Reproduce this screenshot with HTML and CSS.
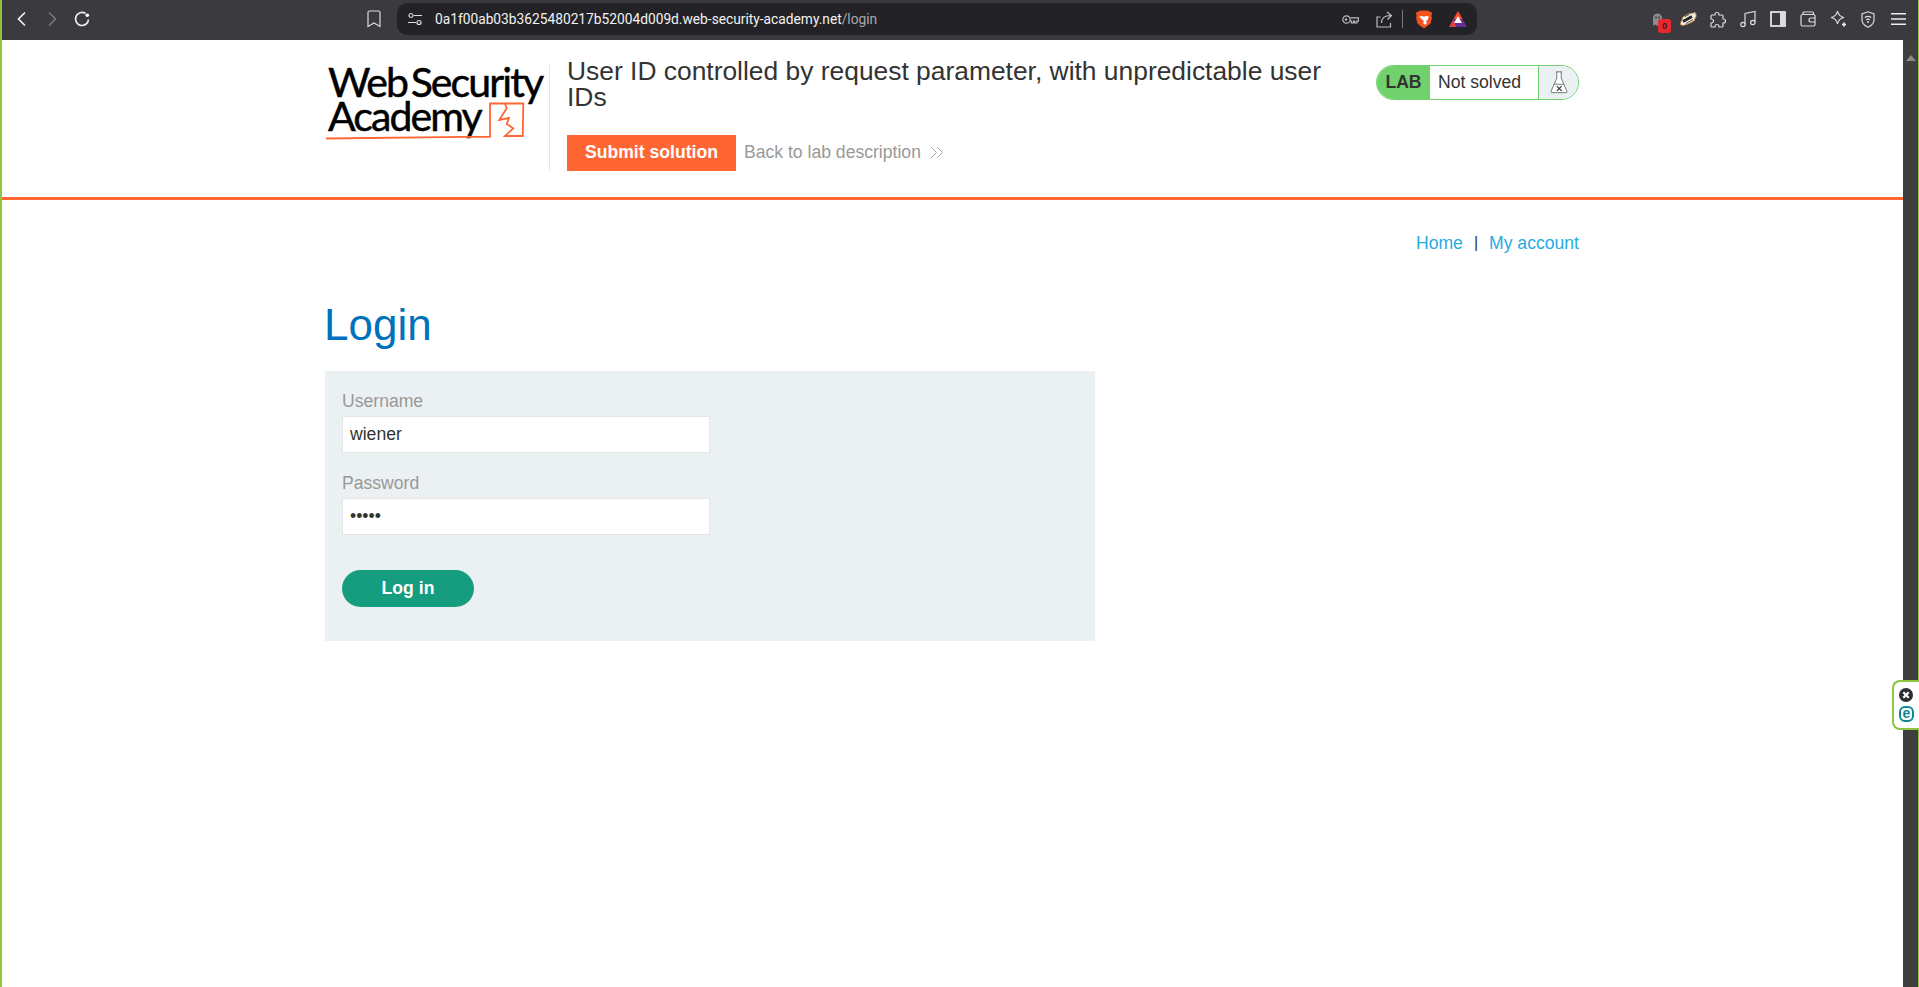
FILE: index.html
```html
<!DOCTYPE html>
<html lang="en">
<head>
  <meta charset="UTF-8" />
  <title>User ID controlled by request parameter, with unpredictable user IDs</title>
  <link rel="stylesheet" href="styles.css">
</head>
<body>
  <div class="edge"></div>
  <div class="window">

    <div class="toolbar">
      <span class="tool"><svg width="16" height="16" viewBox="0 0 16 16"><path d="M11 1.5 4.5 8l6.500 6.500" class="ico"/></svg></span>
      <span class="tool"><svg width="16" height="16" viewBox="0 0 16 16"><path d="M5 1.500 11.500 8 5 14.500" class="ico dim"/></svg></span>
      <span class="tool"><svg width="18" height="18" viewBox="0 0 18 18"><path d="M15.500 9.500A6.500 6.500 0 1 1 12.500 3.500" class="ico"/><circle cx="14.300" cy="5.300" r="1.800" fill="#fff"/></svg></span>
      <span class="tool bookmark"><svg width="14" height="18" viewBox="0 0 14 18"><path d="M2.500 1h9a1.500 1.500 0 0 1 1.500 1.500V16.500L7 13l-6 3.500V2.500A1.500 1.500 0 0 1 2.500 1z" class="ico thin"/></svg></span>

      <div class="urlbar">
        <svg class="tune" width="14" height="14" viewBox="0 0 14 14"><path d="M6 3.500h8M0 10.500h8" class="ico thin"/><circle cx="3" cy="3.500" r="2" class="ico thin"/><circle cx="11" cy="10.500" r="2" class="ico thin"/></svg>
        <span class="url">0a1f00ab03b3625480217b52004d009d.web-security-academy.net<span class="url-path">/login</span></span>
        <span class="tool key"><svg width="17" height="11" viewBox="0 0 17 11"><circle cx="4.500" cy="5.500" r="3.700" class="ico key-line"/><circle cx="4" cy="5.500" r="1.200" fill="#bbb"/><path d="M8.500 3.800H16.500V7.200H15V9H12.800V7.200H11.500V9H9.500V7.200H8.500" class="ico key-line"/></svg></span>
        <span class="tool share"><svg width="17" height="17" viewBox="0 0 17 17"><path d="M4.500 6H1v10h13.500v-4" class="ico key-line"/><path d="M5.500 12c0-5 3-7.500 9-7.500M11 1l4.500 3.500L11.500 8.500" class="ico key-line"/></svg></span>
        <span class="url-sep"></span>
        <span class="tool lion"><svg width="16" height="19" viewBox="0 0 16 19"><path d="M4 .5h8l1.500 1.500 1.500-.5 1 2-.7 2.500.7 1.500-1.500 6-3 2.500L8 18.500 4.500 16l-3-2.500L0 7.500.7 6 0 3.500l1-2 1.500.5z" fill="#f1521f"/><path d="M3 6.500l3-.5 2 .8 2-.8 3 .5-1.500 3.500-1.500 1 1 2-2 2-2-2 1-2-1.500-1z" fill="#fff"/></svg></span>
        <span class="tool bat"><svg width="18" height="16" viewBox="0 0 18 16"><path d="M9 0l9 16H0z" fill="#662d91"/><path d="M9 0 13.500 8h-9z" fill="#ff4724"/><path d="M0 16l4.500-8L7 16z" fill="#ff4724" opacity=".8"/><path d="M9 5l4 7H5z" fill="#fff"/></svg></span>
      </div>

      <span class="tool ghost"><svg width="14" height="16" viewBox="0 0 14 16"><path d="M2 15V7a4.500 4.500 0 0 1 9 0v8l-2-1.500-2.500 1.500L4 13.500z" fill="#8b8b90"/><circle cx="5" cy="6.500" r="1" fill="#3b3a3f"/><circle cx="8" cy="6.500" r="1" fill="#3b3a3f"/></svg><span class="badge">0</span></span>
      <span class="tool"><svg width="18" height="14" viewBox="0 0 18 14"><path d="M1 12.500 4 5l5-3 7.500-1.500.8 3.500-2.300 5-6 3-5 1.500z" fill="#f4eee2" stroke="#b97a3e" stroke-width=".8"/><path d="M4 9.500 13 4.500" stroke="#222" stroke-width="2.600"/><path d="M7 11.500l7-4M6 4.500l4-2" stroke="#444" stroke-width="1"/></svg></span>
      <span class="tool"><svg width="17" height="17" viewBox="0 0 17 17"><path d="M7 1.500a2 2 0 0 1 2 2V4h3a1 1 0 0 1 1 1v3h.5a2 2 0 0 1 0 4H13v3a1 1 0 0 1-1 1H9v-.5a2 2 0 0 0-4 0V16H2a1 1 0 0 1-1-1v-3h.5a2 2 0 0 0 0-4H1V5a1 1 0 0 1 1-1h3v-.5a2 2 0 0 1 2-2z" class="ico thin"/></svg></span>
      <span class="tool"><svg width="16" height="18" viewBox="0 0 16 18"><path d="M5 14.500V3.500L15 1.500V12" class="ico thin"/><circle cx="3" cy="14.500" r="2.200" class="ico thin"/><circle cx="12.800" cy="12.500" r="2.200" class="ico thin"/></svg></span>
      <span class="tool"><svg width="16" height="16" viewBox="0 0 16 16"><rect x="1" y="1" width="14" height="14" class="ico" stroke-width="1.500"/><rect x="10" y="1" width="5" height="14" fill="#ddd"/></svg></span>
      <span class="tool"><svg width="16" height="16" viewBox="0 0 16 16"><path d="M3 3.500V2a1 1 0 0 1 1-1h8.500a1 1 0 0 1 1 1v2" class="ico thin"/><rect x="1" y="3.500" width="14" height="11.500" rx="1.500" class="ico thin"/><path d="M15 7h-4a2 2 0 0 0 0 4h4" class="ico thin"/></svg></span>
      <span class="tool"><svg width="17" height="18" viewBox="0 0 17 18"><path d="M7.500 1c.8 4 2.500 5.700 6.500 6.500-4 .8-5.700 2.500-6.500 6.500-.8-4-2.500-5.700-6.500-6.500C5 6.700 6.700 5 7.500 1z" class="ico thin"/><path d="M14 12.500v4M12 14.500h4" class="ico"/></svg></span>
      <span class="tool"><svg width="14" height="17" viewBox="0 0 14 17"><path d="M7 .8 13 3v6c0 3.500-2.800 5.800-6 7.200C3.800 14.800 1 12.500 1 9V3z" class="ico thin"/><path d="M3.800 6.500c2-1.500 4.400-1.500 6.400 0M5.200 8.800c1.100-.8 2.500-.8 3.600 0" class="ico thin"/><circle cx="7" cy="11" r="1" fill="#ddd"/></svg></span>
      <span class="tool"><svg width="15" height="12" viewBox="0 0 15 12"><path d="M0 .7h15M0 6h15M0 11.300h15" class="ico" stroke-width="1.200"/></svg></span>
    </div>

    <div class="viewport">
      <div class="page">

        <div class="lab-header">
          <div class="lab-inner">
            <div class="logo">
              <div class="logo-text">Web Security<br>Academy</div>
              <svg class="logo-mark" width="220" height="90" viewBox="0 0 220 90">
                <path d="M1 78.500 141 76.800H165V43.500H198.300L197.700 76H180L188.300 68.300 181.700 64 184 58 174.300 60 181.700 48.300 180 43.500" class="logo-line"/>
              </svg>
            </div>
            <div class="logo-rule"></div>
            <div class="title-block">
              <h2 class="lab-title">User ID controlled by request parameter, with unpredictable user IDs</h2>
              <div class="lab-actions">
                <button class="submit-btn">Submit solution</button>
                <a class="back-link" href="#">Back to lab description
                  <svg width="14" height="13" viewBox="0 0 14 13"><path d="M1 1l5.500 5.500L1 12M7 1l5.500 5.500L7 12" class="chev"/></svg>
                </a>
              </div>
            </div>
            <div class="lab-status">
              <span class="status-tag">LAB</span>
              <span class="status-text">Not solved</span>
              <span class="status-icon">
                <svg width="18" height="23" viewBox="0 0 20 26"><path d="M6.500 1h7M7.500 1v7L1 23a1 1 0 0 0 1 1.500h16a1 1 0 0 0 1-1.500L12.500 8V1" class="flask"/><path d="M4.500 15h11" class="flask"/><path d="M7.500 17l5.500 5.500M13 17l-5.500 5.500" class="flask-x"/></svg>
              </span>
            </div>
          </div>
        </div>

        <div class="content">
          <nav class="top-links">
            <a href="#">Home</a><span class="pipe">|</span><a href="#">My account</a>
          </nav>
          <h1 class="page-title">Login</h1>
          <form class="login-form">
            <label>Username</label>
            <input type="text" value="wiener">
            <label>Password</label>
            <input type="password" value="peter">
            <button type="button" class="login-btn">Log in</button>
          </form>
        </div>

      </div>

      <div class="scrollbar">
        <svg width="10" height="6" viewBox="0 0 10 6"><path d="M5 0l5 6H0z" fill="#8a8a8a"/></svg>
      </div>
    </div>
  </div>
  <div class="edge edge-right"></div>

  <div class="eset-tab">
    <svg width="14" height="14" viewBox="0 0 14 14"><circle cx="7" cy="7" r="7" fill="#2b2f33"/><path d="M4.300 4.300l5.400 5.400M9.700 4.300 4.300 9.700" stroke="#fff" stroke-width="2.200"/></svg>
    <span class="eset-e">e</span>
  </div>
</body>
</html>
```

FILE: styles.css
```css
html, body {
  margin: 0;
  height: 100%;
  overflow: hidden;
}
body {
  display: flex;
  background-color: #fff;
  font-family: "Liberation Sans", Arial, sans-serif;
  font-size: 17.6px;
  color: #333332;
}
.edge {
  width: 2px;
  background-color: #8cc63f;
}
.edge-right {
  width: 1px;
}
.window {
  flex: 1;
  display: flex;
  flex-direction: column;
  min-width: 0;
}

/* browser chrome */
.toolbar {
  height: 40px;
  box-sizing: border-box;
  padding: 0 0 2px 5px;
  display: flex;
  align-items: center;
  background-color: #3b3a3f;
}
.tool {
  width: 30px;
  height: 30px;
  flex: none;
  display: flex;
  align-items: center;
  justify-content: center;
  position: relative;
}
.ico {
  fill: none;
  stroke: #eee;
  stroke-width: 1.700;
}
.ico.thin {
  stroke: #ddd;
  stroke-width: 1.200;
}
.ico.dim {
  stroke: #77767a;
}
.ico.key-line {
  stroke: #bdbdc0;
  stroke-width: 1.200;
}
.bookmark {
  margin-left: 262px;
  margin-right: 8px;
}
.urlbar {
  width: 1080px;
  height: 32px;
  flex: none;
  margin-right: 166px;
  display: flex;
  align-items: center;
  border-radius: 10px;
  background-color: #232227;
}
.tune {
  margin-left: 11px;
  margin-right: 13px;
}
.url {
  flex: 1;
  font-family: Roboto, sans-serif;
  font-size: 13.750px;
  color: #f2f2f2;
}
.url-path {
  color: #a9a9ad;
}
.key, .share {
  width: 34px;
}
.url-sep {
  width: 1px;
  height: 18px;
  margin: 0 4px 0 1px;
  background-color: #77767a;
}
.lion, .bat {
  width: 34px;
}
.bat {
  margin-right: 2px;
}
.badge {
  position: absolute;
  left: 15px;
  top: 15px;
  width: 13px;
  height: 14px;
  border-radius: 3px;
  background-color: #e8282f;
  color: #222;
  font-size: 9px;
  font-weight: bold;
  line-height: 14px;
  text-align: center;
}

/* page */
.viewport {
  flex: 1;
  display: flex;
  min-height: 0;
}
.page {
  flex: 1;
  min-width: 0;
}
.scrollbar {
  width: 15px;
  padding-top: 15px;
  display: flex;
  justify-content: center;
  align-items: flex-start;
  background-color: #3f3f3f;
}
.lab-header {
  height: 157px;
  border-bottom: 3px solid #ff6633;
}
.lab-inner {
  width: 1254px;
  margin: 0 auto;
  padding: 20px 1px 0 0;
  display: flex;
  align-items: flex-start;
}
.logo {
  width: 224px;
  height: 90px;
  flex: none;
  padding: 5px 0 0 3px;
  box-sizing: border-box;
  position: relative;
}
.logo-text {
  font-family: Lato, sans-serif;
  font-size: 41px;
  line-height: 34px;
  letter-spacing: -1.900px;
  word-spacing: -5px;
  white-space: nowrap;
  color: #000;
  -webkit-text-stroke: 0.5px #000;
}
.logo-mark {
  position: absolute;
  left: 0;
  top: 0;
}
.logo-line {
  fill: none;
  stroke: #ff6633;
  stroke-width: 1.800;
}
.logo-rule {
  width: 1px;
  height: 105px;
  margin-top: 5px;
  flex: none;
  background-color: #e6e6e6;
}
.title-block {
  width: 780px;
  padding-left: 17px;
  flex: none;
}
.lab-title {
  margin: -2px 0 0;
  font-size: 26.400px;
  font-weight: normal;
  line-height: 26px;
}
.lab-actions {
  margin-top: 25px;
  display: flex;
  align-items: center;
}
.submit-btn {
  height: 36px;
  padding: 0 18px 2px;
  border: none;
  background-color: #ff6633;
  color: #fff;
  font-family: inherit;
  font-size: 17.600px;
  font-weight: bold;
}
.back-link {
  margin-left: 8px;
  margin-bottom: 2px;
  display: flex;
  align-items: center;
  gap: 9px;
  color: #999;
  text-decoration: none;
}
.chev {
  fill: none;
  stroke: #a6a6a6;
  stroke-width: 1;
}
.lab-status {
  width: 203px;
  height: 35px;
  margin-top: 5px;
  margin-left: auto;
  box-sizing: border-box;
  display: flex;
  align-items: center;
  border: 1.500px solid #70d16d;
  border-radius: 18px;
  overflow: hidden;
}
.status-tag {
  width: 53px;
  height: 100%;
  flex: none;
  display: flex;
  align-items: center;
  justify-content: center;
  background-color: #70d16d;
  font-weight: bold;
}
.status-text {
  flex: 1;
  padding-left: 8px;
}
.status-icon {
  width: 39px;
  height: 100%;
  flex: none;
  display: flex;
  align-items: center;
  justify-content: center;
  border-left: 1.500px solid #70d16d;
  background-color: #ebf0f2;
}
.flask {
  fill: #fff;
  stroke: #666;
  stroke-width: 1;
}
.flask-x {
  fill: none;
  stroke: #333;
  stroke-width: 1.300;
}
.content {
  width: 1254px;
  margin: 0 auto;
  padding-right: 1px;
}
.top-links {
  margin-top: 31px;
  display: flex;
  justify-content: flex-end;
  line-height: 24px;
}
.top-links a {
  color: #29abe2;
  text-decoration: none;
}
.pipe {
  margin: 0 11px;
  font-size: 16px;
}
.page-title {
  margin: 45px 0 0 -1px;
  font-size: 44px;
  font-weight: normal;
  line-height: 50px;
  color: #0071bc;
}
.login-form {
  width: 770px;
  height: 270px;
  margin-top: 21px;
  padding: 0 17px;
  box-sizing: border-box;
  background-color: #ebf0f2;
}
.login-form label {
  display: block;
  padding-top: 19px;
  margin-bottom: 4px;
  line-height: 22px;
  color: #999;
}
.login-form input {
  width: 368px;
  height: 37px;
  box-sizing: border-box;
  display: block;
  padding: 0 7px;
  border: 1px solid #e6e6e6;
  background-color: #fff;
  font-family: inherit;
  font-size: 17.600px;
  color: #333332;
}
.login-btn {
  display: block;
  width: 132px;
  height: 37px;
  margin-top: 35px;
  border: none;
  border-radius: 19px;
  background-color: #169c7f;
  color: #fff;
  font-family: inherit;
  font-size: 17.600px;
  font-weight: bold;
}

/* extension tab on the right edge */
.eset-tab {
  position: absolute;
  right: 0;
  top: 680px;
  width: 27px;
  height: 50px;
  box-sizing: border-box;
  padding: 6px 0 0 5px;
  display: flex;
  flex-direction: column;
  gap: 4px;
  border: 2px solid #8cc63f;
  border-right: none;
  border-radius: 8px 0 0 8px;
  background-color: #fff;
}
.eset-e {
  width: 11px;
  height: 12px;
  border: 2px solid #0f8a93;
  border-radius: 6px;
  color: #0f8a93;
  font-size: 14px;
  font-weight: bold;
  line-height: 11px;
  text-align: center;
}
```
